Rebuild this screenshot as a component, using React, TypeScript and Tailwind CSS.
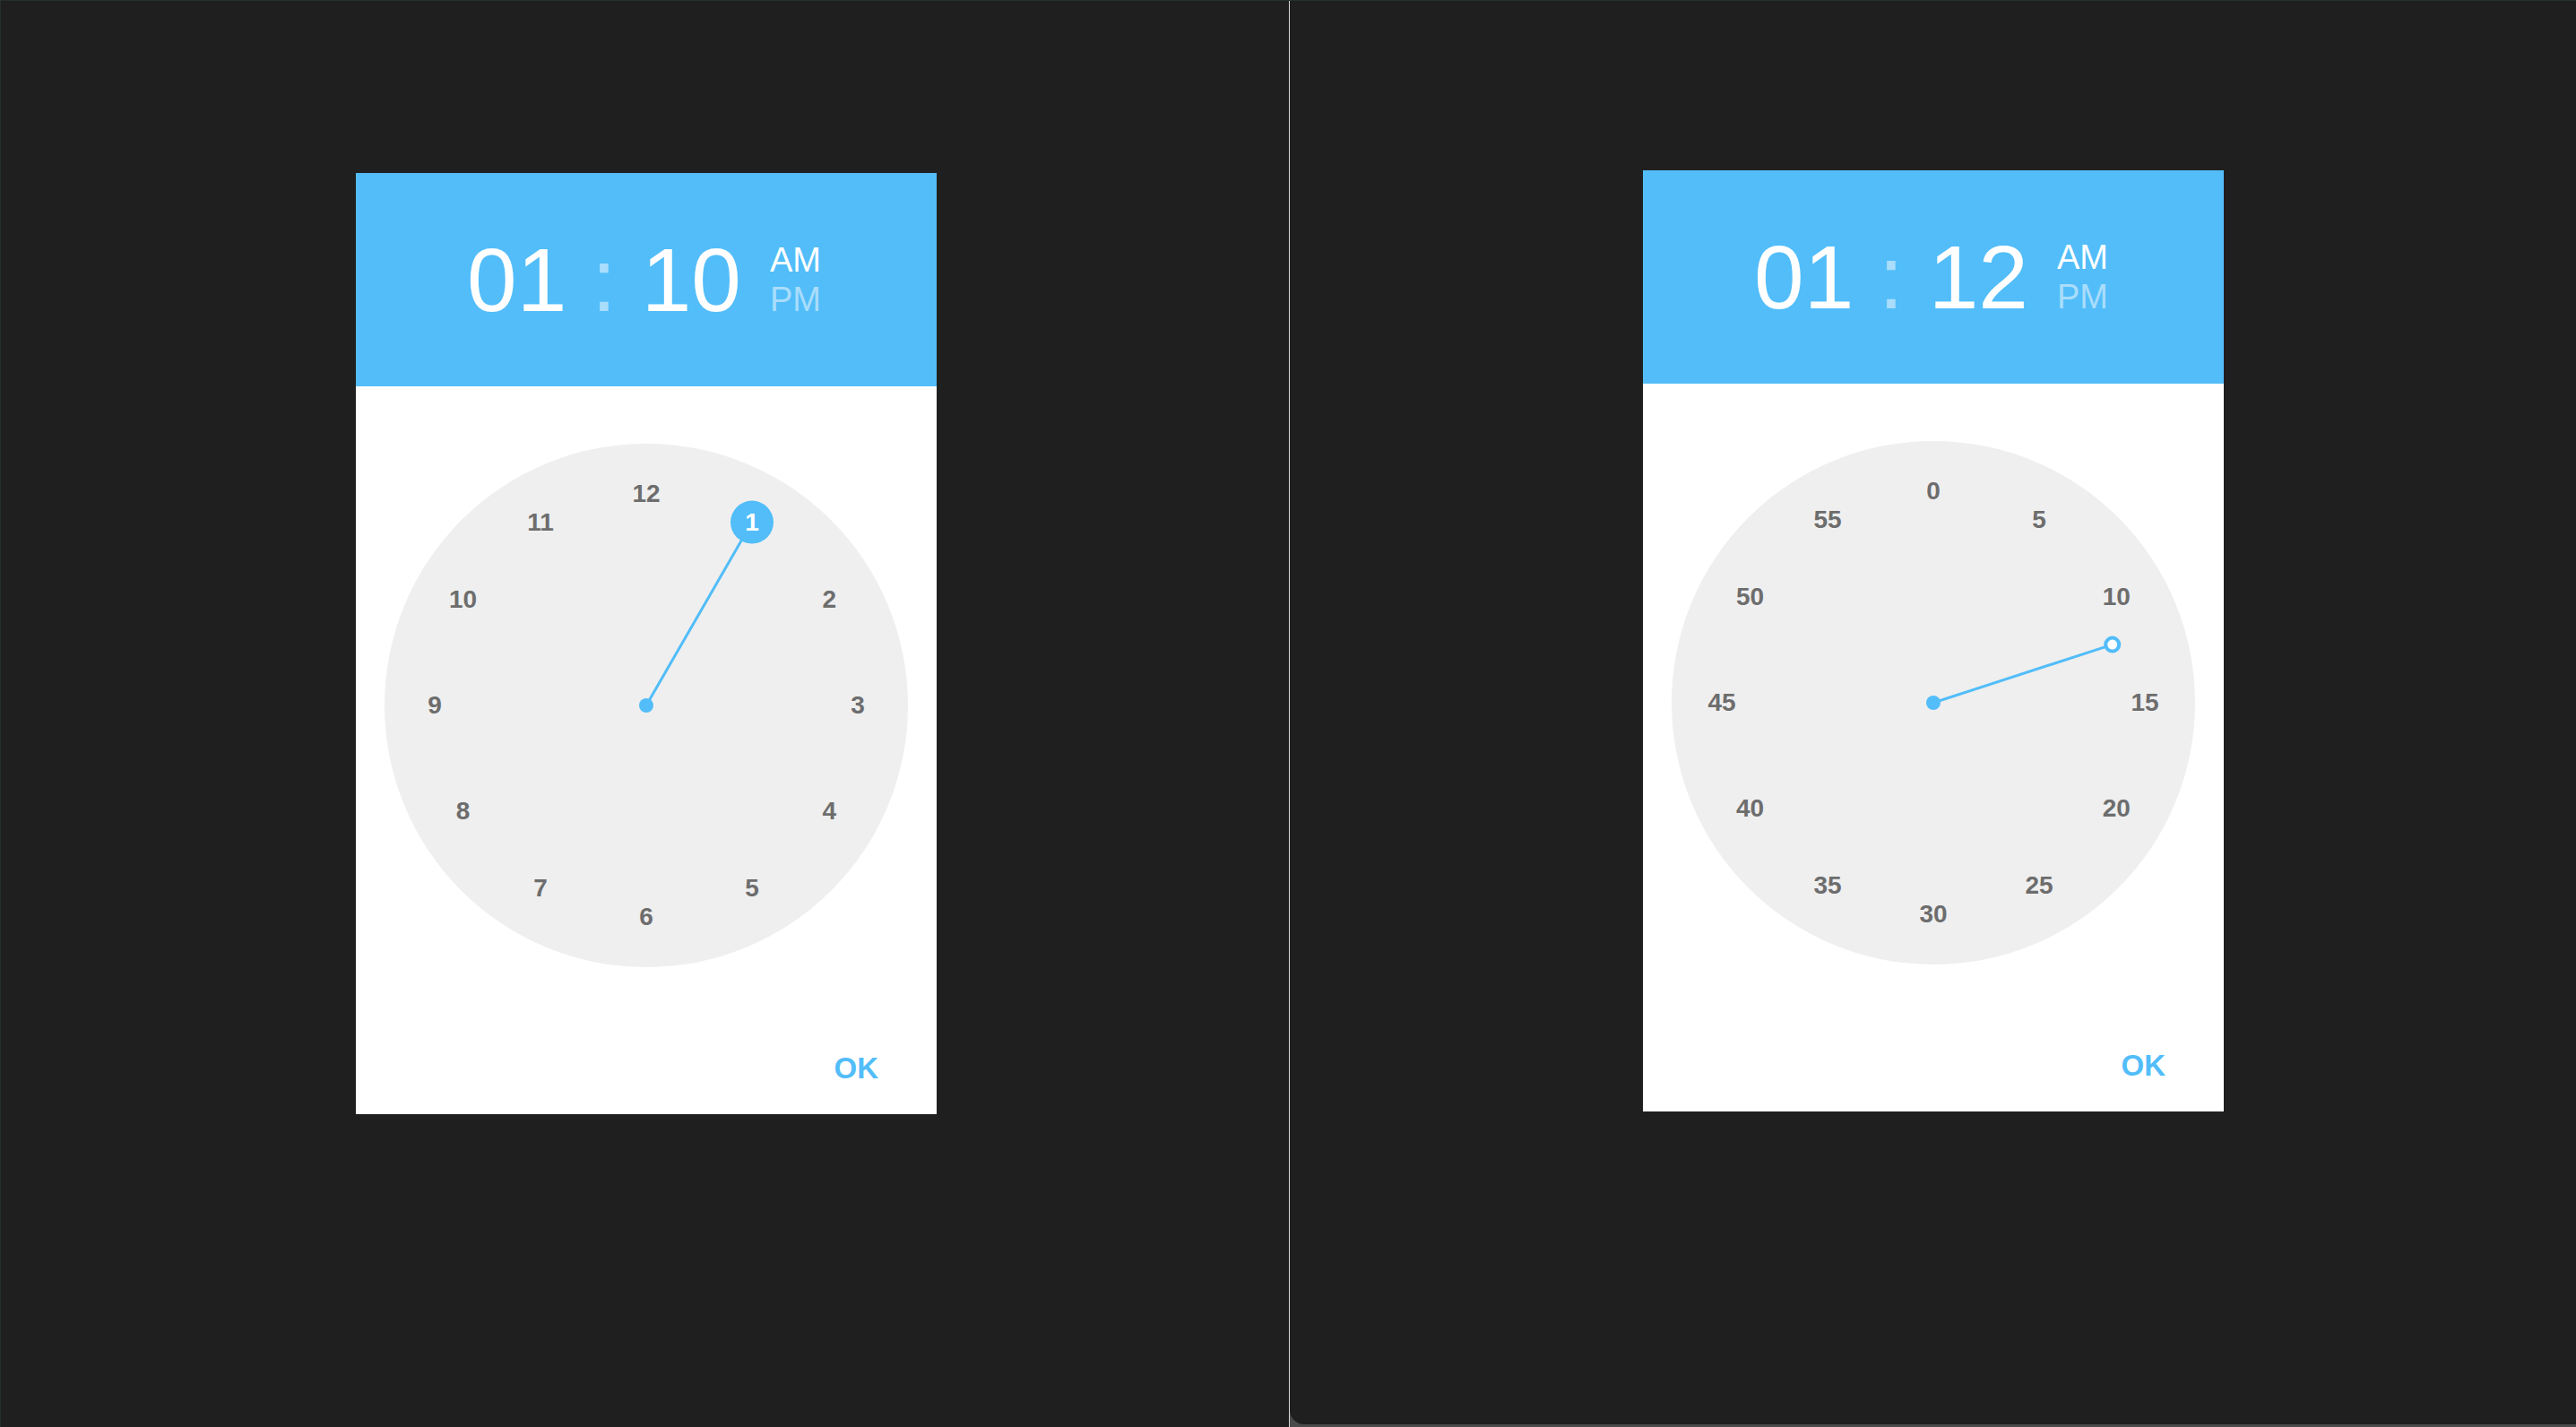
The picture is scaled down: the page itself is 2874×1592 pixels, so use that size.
import React from 'react'

const BLUE = '#52bdf9'
const SIZE = 584
const C = SIZE / 2
const LABEL_R = 236

type Label = { text: string; angle: number }

const HOURS: Label[] = [12, 1, 2, 3, 4, 5, 6, 7, 8, 9, 10, 11].map((h, i) => ({ text: String(h), angle: i * 30 }))
const MINUTES: Label[] = Array.from({ length: 12 }, (_, i) => ({ text: String(i * 5), angle: i * 30 }))

function pos(angle: number, r: number) {
  const a = (angle * Math.PI) / 180
  return { x: C + r * Math.sin(a), y: C - r * Math.cos(a) }
}

function Dial({ labels, selected, handAngle, handR, knob }: {
  labels: Label[]
  selected?: string
  handAngle: number
  handR: number
  knob: 'big' | 'ring'
}) {
  const end = pos(handAngle, handR)
  return (
    <div className="relative w-[584px] h-[584px] rounded-full bg-[#efefef]">
      <svg className="absolute inset-0" width={SIZE} height={SIZE} viewBox={`0 0 ${SIZE} ${SIZE}`}>
        <line x1={C} y1={C} x2={end.x} y2={end.y} stroke={BLUE} strokeWidth={3} strokeLinecap="round" />
        <circle cx={C} cy={C} r={8} fill={BLUE} />
        {knob === 'big' ? (
          <circle cx={end.x} cy={end.y} r={24} fill={BLUE} />
        ) : (
          <circle cx={end.x} cy={end.y} r={7.5} fill="#ffffff" stroke={BLUE} strokeWidth={4} />
        )}
      </svg>
      {labels.map(l => {
        const p = pos(l.angle, LABEL_R)
        return (
          <span
            key={l.text}
            className={`absolute -translate-x-1/2 -translate-y-1/2 text-[28px] leading-none font-bold ${selected === l.text ? 'text-white' : 'text-[#6d6d6d]'}`}
            style={{ left: p.x, top: p.y }}
          >
            {l.text}
          </span>
        )
      })}
    </div>
  )
}

function Picker({ minute, children }: { minute: string; children: React.ReactNode }) {
  return (
    <div className="w-[648px] bg-white flex flex-col">
      <div className="h-[238px] bg-[#52bdf9] flex items-center justify-center pr-[5px] text-white">
        <span className="text-[100px] leading-none whitespace-pre">
          01 <span className="text-[#a9ddfb]">:</span> {minute}
        </span>
        <div className="ml-[32px] flex flex-col text-[38px] leading-[44px]">
          <span>AM</span>
          <span className="text-[#a9ddfb]">PM</span>
        </div>
      </div>
      <div className="pt-[64px] flex justify-center">{children}</div>
      <div className="flex justify-end pr-[65px] pt-[96px] pb-[35px]">
        <button className="text-[33px] leading-none font-bold text-[#52bdf9]">OK</button>
      </div>
    </div>
  )
}

export default function App() {
  return (
    <div
      className="w-[2874px] h-[1592px] flex bg-[#1f1f1f] border-t border-l border-[#27302a]"
      style={{ fontFamily: '"Liberation Sans", Arial, sans-serif' }}
    >
      <div className="w-[1437px] h-full pl-[396px] pt-[192px]">
        <Picker minute="10">
          <Dial labels={HOURS} selected="1" handAngle={30} handR={LABEL_R} knob="big" />
        </Picker>
      </div>
      <div className="w-px h-full bg-[#d6d6d6]" />
      <div className="flex-1 h-full bg-[#4a4a4a] flex flex-col">
        <div className="h-[1588px] bg-[#1f1f1f] rounded-bl-[16px] pl-[394px] pt-[189px]">
          <Picker minute="12">
            <Dial labels={MINUTES} handAngle={72} handR={210} knob="ring" />
          </Picker>
        </div>
      </div>
    </div>
  )
}
